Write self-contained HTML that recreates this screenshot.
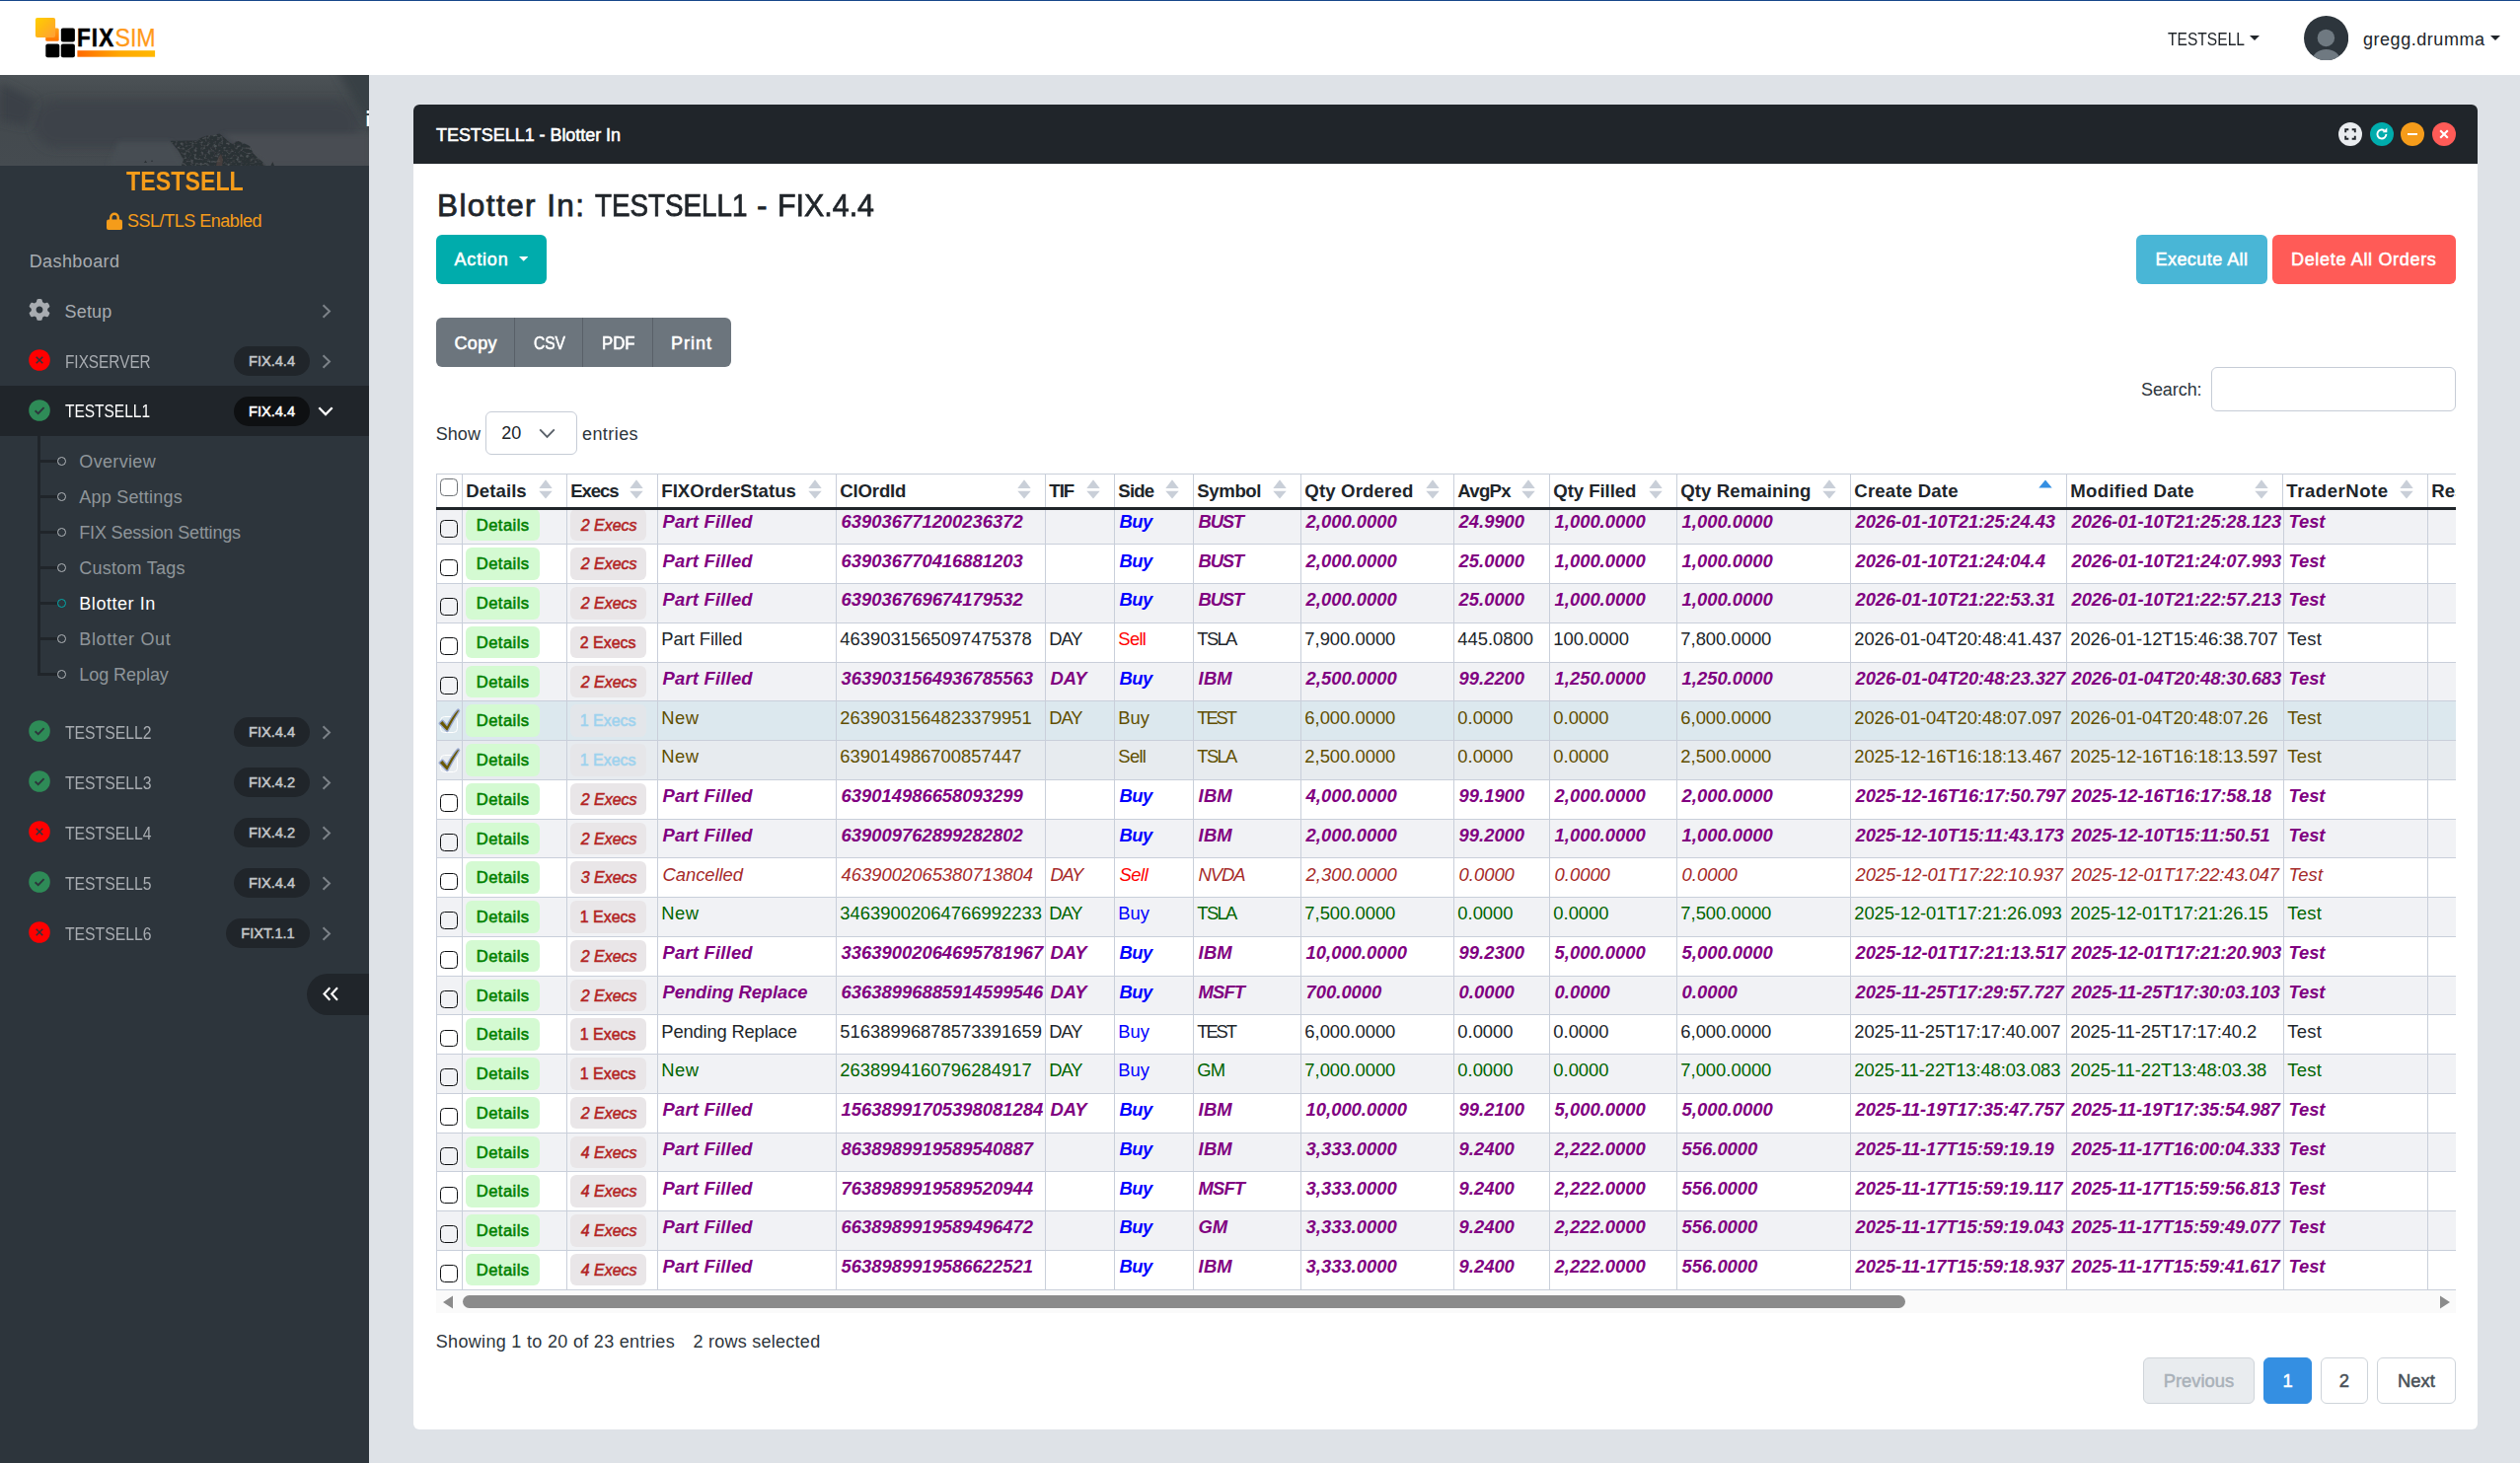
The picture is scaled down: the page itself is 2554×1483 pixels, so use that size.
<!DOCTYPE html>
<html lang="en">
<head>
<meta charset="utf-8">
<title>FIXSIM - TESTSELL1 - Blotter In</title>
<style>
*{box-sizing:border-box}
html,body{margin:0;padding:0}
body{width:2554px;height:1483px;overflow:hidden;background:#dee2e7;font-family:"Liberation Sans",sans-serif;font-size:18px;color:#20252a}
#app{position:relative;width:2554px;height:1483px;overflow:hidden}
.tx{position:absolute;line-height:1;white-space:nowrap}
.abs{position:absolute}
.b{font-weight:bold}
.sb{font-weight:normal;-webkit-text-stroke-width:0.55px}
#topbar{position:absolute;left:0;top:0;width:2554px;height:76px;background:#fff;border-top:1px solid #17478a}
#sidebar{position:absolute;left:0;top:76px;width:374px;height:1407px;background:#2d353c;color:#a8acb1}
#cover{position:absolute;left:0;top:0;width:374px;height:92px;overflow:hidden;background:#42484d}
.mi{position:absolute;left:0;width:374px;height:51px}
.mi.act{background:#20252a}
.badge{position:absolute;height:30px;border-radius:15px;background:#20252a;color:#c3c6c9;font-weight:normal;-webkit-text-stroke-width:0.5px;font-size:14.6px;line-height:30px;text-align:center}
.mi.act .badge{background:#0e1012;color:#fff}
.dot{position:absolute;width:9.6px;height:9.6px;border:1.8px solid #b3b7bb;border-radius:50%}
#panel{position:absolute;left:419px;top:106px;width:2092px;height:1343px;background:#fff;border-radius:6px;overflow:hidden}
#phead{position:absolute;left:0;top:0;width:2092px;height:59.5px;background:#20252a}
.pbtn{position:absolute;top:17.8px;width:24px;height:24px;border-radius:50%}
.btn{position:absolute;border-radius:6px;color:#fff;font-weight:bold}
#tbl{position:absolute;left:442px;top:480px;width:2047px;height:828px;overflow:hidden;background:#fff}
.hr{position:absolute;left:0;top:0;width:2200px;height:37px;border-top:1px solid #c9cfda;border-bottom:3px solid #20252a;display:flex}
.r{position:absolute;left:0;width:2200px;display:flex;border-bottom:1px solid #c9cfda;font-size:18.4px;overflow:hidden}
.r.s{background:#f1f2f5}
.r.sel1{background:#dce8ee}
.r.sel2{background:#e7ebef}
.c{position:relative;flex:0 0 auto;border-left:1px solid #c9cfda;height:100%;overflow:hidden;white-space:nowrap}
.c .v{position:absolute;left:3.3px;line-height:1;white-space:nowrap}
.hr .c{font-weight:bold;font-size:18.6px}
.pf{color:#800080;font-weight:bold;font-style:italic}
.cx{color:#a52a2a;font-style:italic}
.nw{color:#006400}
.nm{color:#20252a}
.sl{color:#604e00}
.buy{color:#0000ff}
.sell{color:#ff0000}
.sl .buy,.sl .sell{color:#604e00}
.det{position:absolute;left:3.3px;width:74.7px;height:32.5px;border-radius:6px;background:#d4fad2;color:#008000;font-weight:normal;-webkit-text-stroke-width:0.55px;font-size:16.6px;line-height:33.4px;letter-spacing:0.45px;text-align:center;font-style:normal}
.exe{position:absolute;left:2.6px;width:77px;height:32.5px;border-radius:6px;background:#e9e6e8;color:#b22222;font-weight:normal;-webkit-text-stroke-width:0.5px;font-size:16px;line-height:34.0px;text-align:center}
.sl .exe{color:#9dd2ee;background:#e6e6e9}
.sel1 .exe{background:#e3e6ea}
.cb{position:absolute;left:2.8px;width:17.8px;height:17.8px;border:1.3px solid #0c0e10;border-radius:4.5px;background:#fff}
.r.s .cb{background:#f1f2f5}
.cbh{border-color:#6f7377;border-width:1.8px}
.cbs{border:1.4px solid #fff;background:transparent !important}
.so{position:absolute;right:14px;top:5.3px;width:14px;height:20px}
.pg{position:absolute;top:1375.7px;height:47.2px;border-radius:6px;border:1px solid #ced4da;background:#fff;color:#495057;font-weight:normal;-webkit-text-stroke-width:0.5px;font-size:18.4px;line-height:45px;text-align:center}
</style>
</head>
<body>
<div id="app">
<div id="topbar">
<svg class="abs" style="left:20px;top:4px" width="160" height="70" viewBox="0 0 160 70">
<defs>
<linearGradient id="g1" x1="0" y1="0" x2="1" y2="1"><stop offset="0" stop-color="#ffd000"/><stop offset="0.45" stop-color="#ffb914"/><stop offset="1" stop-color="#ff9f3a"/></linearGradient>
<linearGradient id="g2" x1="0" y1="0" x2="1" y2="0"><stop offset="0" stop-color="#ff6a00"/><stop offset="0.55" stop-color="#ffa800"/><stop offset="1" stop-color="#ffb800"/></linearGradient>
<linearGradient id="g3" x1="0" y1="0" x2="0" y2="1"><stop offset="0" stop-color="#ffa31a"/><stop offset="1" stop-color="#ff7400"/></linearGradient>
</defs>
<rect x="26.2" y="23.5" width="13.5" height="13.3" rx="1.5" fill="url(#g3)"/>
<rect x="15.9" y="13" width="20.2" height="20" rx="2" fill="url(#g1)"/>
<rect x="41.8" y="23.5" width="14.1" height="14" rx="2" fill="#000"/>
<rect x="26.3" y="39.4" width="14" height="13.8" rx="2" fill="#000"/>
<rect x="41.8" y="39.4" width="14.1" height="13.8" rx="2" fill="#000"/>
<rect x="58.4" y="46.2" width="78.7" height="6.5" fill="url(#g2)"/>
<text transform="translate(58.0 42.2) scale(0.875 1)" font-family="Liberation Sans, sans-serif" font-weight="bold" font-size="25.6" letter-spacing="1.3" fill="#000" stroke="#000" stroke-width="0.5">FIX</text>
<text x="96.4" y="42.2" font-family="Liberation Sans, sans-serif" font-size="25.6" textLength="41.3" lengthAdjust="spacingAndGlyphs" fill="#ff9a1a" stroke="#ff9a1a" stroke-width="0.25">SIM</text>
</svg>
<span id="t1" class="tx" style="top:29.76px;font-size:18.00px;left:2197.00px;transform-origin:0 50%;transform:scaleX(0.8662);">TESTSELL</span>
<svg class="abs" style="left:2280px;top:34.9px" width="10" height="5" viewBox="0 0 10 5"><path d="M0 0h10L5 5z" fill="#20252a"/></svg>
<svg class="abs" style="left:2334.8px;top:14.9px" width="45.2" height="45.2" viewBox="0 0 45 45"><defs><clipPath id="av"><circle cx="22.5" cy="22.5" r="22.5"/></clipPath></defs><circle cx="22.5" cy="22.5" r="22.5" fill="#2d353c"/><g clip-path="url(#av)" fill="#6f7981"><circle cx="22.3" cy="22.3" r="8.7"/><ellipse cx="22.5" cy="46" rx="14.5" ry="12.2"/></g></svg>
<span id="t2" class="tx" style="top:29.76px;font-size:18.00px;left:2395.00px;letter-spacing:0.536px;">gregg.drumma</span>
<svg class="abs" style="left:2524px;top:34.9px" width="10" height="5" viewBox="0 0 10 5"><path d="M0 0h10L5 5z" fill="#20252a"/></svg>
</div>
<div id="sidebar">
<div id="cover"><svg width="374" height="92" viewBox="0 0 374 92">
<defs><linearGradient id="cg" x1="0" y1="0" x2="0" y2="1"><stop offset="0" stop-color="#4c5256"/><stop offset="0.3" stop-color="#43494d"/><stop offset="1" stop-color="#454b50"/></linearGradient>
<filter id="bl" filterUnits="userSpaceOnUse" x="-30" y="-30" width="434" height="152"><feGaussianBlur stdDeviation="5"/></filter>
<filter id="b3" filterUnits="userSpaceOnUse" x="-30" y="-30" width="434" height="152"><feGaussianBlur stdDeviation="2.5"/></filter>
<filter id="b2"><feGaussianBlur stdDeviation="0.5"/></filter>
<filter id="nz" x="0" y="0" width="100%" height="100%" color-interpolation-filters="sRGB"><feTurbulence type="fractalNoise" baseFrequency="0.3 0.38" numOctaves="2" seed="11" result="n"/><feColorMatrix in="n" type="matrix" values="0 0 0 0 0.30  0 0 0 0 0.325  0 0 0 0 0.34  3.2 0 0 0 -1.55" result="c"/><feComposite in="c" in2="SourceGraphic" operator="in"/></filter>
</defs>
<rect width="374" height="92" fill="url(#cg)"/>
<rect x="34" y="26" width="330" height="48" rx="24" fill="#3d4348" filter="url(#bl)"/>
<polygon points="0,8 36,26 28,52 0,46" fill="#3b4146" filter="url(#bl)"/>
<polygon points="224,60 374,60 374,92 272,92" fill="#484e53" filter="url(#b3)"/>
<polygon points="338,-10 400,-10 400,48 372,48" fill="#394045" filter="url(#bl)"/>
<polygon points="120,68 174,68 186,92 110,92" fill="#474d52" filter="url(#b3)"/>
<g filter="url(#b2)"><path id="mt" d="M172.4 66.8 L199 66.4 L204 63.6 L209.7 61.4 L216 61 L222.4 59.6 L226 62.5 L230 66 L232.7 68.4 L236 70.3 L238.5 67.8 L242.2 66.9 L246 69 L250 70.5 L253.3 72.3 L255 76 L256.5 79.2 L260 83 L262.9 85.6 L266 88 L269.2 92 L184 92 L186 86 L181 77 L176 71 Z" fill="#2b3034"/>
<path d="M172.4 66.8 L199 66.4 L204 63.6 L209.7 61.4 L216 61 L222.4 59.6 L226 62.5 L230 66 L232.7 68.4 L236 70.3 L238.5 67.8 L242.2 66.9 L246 69 L250 70.5 L253.3 72.3 L255 76 L256.5 79.2 L260 83 L262.9 85.6 L266 88 L269.2 92 L184 92 L186 86 L181 77 L176 71 Z" fill="#000" filter="url(#nz)"/>
<path d="M274.5 92 L276.3 88 L278 92 Z M146 89 l1.5 -2.5 l1.5 2.5 z M153 88 l1 -2 l1 2 z" fill="#2b3034"/>
<path d="M219 92 L221 84 L224 80 L226 86 L225 92 Z" fill="#5a4a44" opacity="0.55"/></g>
</svg></div>
<div class="abs" style="left:372px;top:36px;width:2px;height:3px;background:#fff;box-shadow:-0.5px 0 0 #6fd0f5"></div><div class="abs" style="left:372px;top:40.8px;width:2px;height:11.5px;background:#fff;box-shadow:-0.5px 0 0 #6fd0f5"></div>
<span id="t3" class="tx b" style="top:94.94px;font-size:27.00px;left:127.50px;transform-origin:0 50%;transform:scaleX(0.8608);color:#f59c1a">TESTSELL</span>
<svg class="abs" style="left:108px;top:139.2px" width="16" height="18" viewBox="0 0 16 18"><path d="M4.3 8V5.4a3.7 3.7 0 0 1 7.4 0V8" fill="none" stroke="#f59c1a" stroke-width="2.4"/><rect x="0" y="7.6" width="16" height="10.4" rx="2" fill="#f59c1a"/></svg>
<span id="t4" class="tx" style="top:139.36px;font-size:18.00px;left:129.00px;letter-spacing:-0.474px;color:#f59c1a">SSL/TLS Enabled</span>
<span id="t5" class="tx" style="top:179.76px;font-size:18.00px;left:29.70px;letter-spacing:0.404px;">Dashboard</span>
<div class="mi" style="top:213.5px">
<svg class="abs" style="left:28.7px;top:13.5px" width="22" height="22" viewBox="0 0 512 512"><path fill="#a8acb1" d="M495.9 166.600C499.100 175.300 496.400 185 489.500 191.200L446.200 230.600C447.300 238.900 447.900 247.400 447.900 256C447.900 264.600 447.300 273.100 446.200 281.400L489.500 320.800C496.400 327 499.100 336.700 495.900 345.400C491.500 357.300 486.200 368.700 480.100 379.700L475.400 387.800C468.800 398.800 461.400 409.200 453.300 419C447.400 426.200 437.600 428.600 428.800 425.800L373.100 408.100C359.700 418.400 344.900 427 329.100 433.500L316.600 490.600C314.600 499.700 307.600 506.900 298.400 508.400C284.600 510.700 270.400 511.900 255.900 511.900C241.400 511.900 227.200 510.700 213.400 508.400C204.200 506.900 197.200 499.700 195.200 490.600L182.700 433.500C166.900 427 152.100 418.400 138.700 408.100L83.100 425.900C74.300 428.700 64.500 426.200 58.600 419.100C50.500 409.300 43.100 398.900 36.500 387.900L31.800 379.800C25.700 368.800 20.400 357.400 16 345.500C12.800 336.800 15.500 327.100 22.400 320.900L65.700 281.500C64.600 273.100 64 264.600 64 256C64 247.400 64.600 238.900 65.700 230.600L22.400 191.200C15.500 185 12.800 175.300 16 166.600C20.400 154.700 25.700 143.300 31.800 132.300L36.500 124.200C43.100 113.200 50.500 102.800 58.600 93C64.500 85.800 74.300 83.400 83.100 86.200L138.800 103.900C152.200 93.600 167 85 182.800 78.500L195.300 21.400C197.300 12.300 204.300 5.100 213.500 3.600C227.300 1.200 241.500 0 256 0C270.500 0 284.700 1.200 298.500 3.500C307.700 5 314.700 12.200 316.700 21.300L329.200 78.400C345 84.900 359.800 93.500 373.200 103.800L428.900 86.100C437.700 83.300 447.500 85.800 453.400 92.900C461.500 102.700 468.900 113.100 475.500 124.100L480.200 132.200C486.300 143.200 491.600 154.600 496 166.500zM256 336C300.200 336 336 300.200 336 256C336 211.800 300.200 176 256 176C211.800 176 176 211.800 176 256C176 300.200 211.800 336 256 336z"/></svg>
<span id="t6" class="tx" style="top:17.26px;font-size:18.00px;left:65.50px;letter-spacing:0.191px;">Setup</span>
<svg class="abs" style="left:325.5px;top:18px" width="10" height="15" viewBox="0 0 10 15"><path d="M1.5 1.2L8 7.5L1.5 13.8" fill="none" stroke="#7c8288" stroke-width="2"/></svg>
</div>
<div class="mi" style="top:264.5px">
<svg class="abs" style="left:28.7px;top:13.6px" width="22" height="22" viewBox="0 0 22 22"><circle cx="11" cy="11" r="10.8" fill="#ff0000"/><path d="M7.7 7.7L14.3 14.3M14.3 7.7L7.7 14.3" fill="none" stroke="#2d353c" stroke-width="1.6"/></svg>
<span id="t7" class="tx" style="top:17.26px;font-size:18.00px;left:65.50px;transform-origin:0 50%;transform:scaleX(0.8525);">FIXSERVER</span>
<span class="badge" style="left:237.0px;top:10.5px;width:77px">FIX.4.4</span>
<svg class="abs" style="left:325.5px;top:18px" width="10" height="15" viewBox="0 0 10 15"><path d="M1.5 1.2L8 7.5L1.5 13.8" fill="none" stroke="#7c8288" stroke-width="2"/></svg>
</div>
<div class="mi act" style="top:315.0px">
<svg class="abs" style="left:28.7px;top:13.6px" width="22" height="22" viewBox="0 0 22 22"><circle cx="11" cy="11" r="10.8" fill="#2e8b57"/><path d="M6.6 11.2L9.7 14.2L15.6 8.2" fill="none" stroke="#2d353c" stroke-width="1.9"/></svg>
<span id="t8" class="tx" style="top:17.26px;font-size:18.00px;left:65.50px;transform-origin:0 50%;transform:scaleX(0.8596);color:#fff;">TESTSELL1</span>
<span class="badge" style="left:237.0px;top:10.5px;width:77px">FIX.4.4</span>
<svg class="abs" style="left:322px;top:21px" width="16" height="10" viewBox="0 0 16 10"><path d="M1.3 1.3L8 8L14.7 1.3" fill="none" stroke="#fff" stroke-width="2.3"/></svg>
</div>
<div class="abs" style="left:38px;top:366.0px;width:2.6px;height:242.8px;background:#20252a"></div>
<div class="abs" style="left:38px;top:390.2px;width:20px;height:2.4px;background:#20252a"></div>
<span class="dot" style="left:57.7px;top:386.6px;"></span>
<span id="t9" class="tx" style="top:382.76px;font-size:18.00px;left:80.30px;letter-spacing:0.336px;color:#8f959a;">Overview</span>
<div class="abs" style="left:38px;top:426.2px;width:20px;height:2.4px;background:#20252a"></div>
<span class="dot" style="left:57.7px;top:422.6px;"></span>
<span id="t10" class="tx" style="top:418.78px;font-size:18.00px;left:80.30px;letter-spacing:0.210px;color:#8f959a;">App Settings</span>
<div class="abs" style="left:38px;top:462.2px;width:20px;height:2.4px;background:#20252a"></div>
<span class="dot" style="left:57.7px;top:458.6px;"></span>
<span id="t11" class="tx" style="top:454.80px;font-size:18.00px;left:80.30px;letter-spacing:-0.175px;color:#8f959a;">FIX Session Settings</span>
<div class="abs" style="left:38px;top:498.3px;width:20px;height:2.4px;background:#20252a"></div>
<span class="dot" style="left:57.7px;top:494.7px;"></span>
<span id="t12" class="tx" style="top:490.82px;font-size:18.00px;left:80.30px;letter-spacing:0.253px;color:#8f959a;">Custom Tags</span>
<div class="abs" style="left:38px;top:534.3px;width:20px;height:2.4px;background:#20252a"></div>
<span class="dot" style="left:57.7px;top:530.7px;border-color:#00acac;"></span>
<span id="t13" class="tx" style="top:526.84px;font-size:18.00px;left:80.30px;letter-spacing:0.545px;color:#fff;">Blotter In</span>
<div class="abs" style="left:38px;top:570.3px;width:20px;height:2.4px;background:#20252a"></div>
<span class="dot" style="left:57.7px;top:566.7px;"></span>
<span id="t14" class="tx" style="top:562.86px;font-size:18.00px;left:80.30px;letter-spacing:0.632px;color:#8f959a;">Blotter Out</span>
<div class="abs" style="left:38px;top:606.3px;width:20px;height:2.4px;background:#20252a"></div>
<span class="dot" style="left:57.7px;top:602.7px;"></span>
<span id="t15" class="tx" style="top:598.88px;font-size:18.00px;left:80.30px;letter-spacing:-0.058px;color:#8f959a;">Log Replay</span>
<div class="mi" style="top:640.6px">
<svg class="abs" style="left:28.7px;top:13.6px" width="22" height="22" viewBox="0 0 22 22"><circle cx="11" cy="11" r="10.8" fill="#2e8b57"/><path d="M6.6 11.2L9.7 14.2L15.6 8.2" fill="none" stroke="#2d353c" stroke-width="1.9"/></svg>
<span id="t16" class="tx" style="top:17.26px;font-size:18.00px;left:65.50px;transform-origin:0 50%;transform:scaleX(0.8746);">TESTSELL2</span>
<span class="badge" style="left:237.0px;top:10.5px;width:77px">FIX.4.4</span>
<svg class="abs" style="left:325.5px;top:18px" width="10" height="15" viewBox="0 0 10 15"><path d="M1.5 1.2L8 7.5L1.5 13.8" fill="none" stroke="#7c8288" stroke-width="2"/></svg>
</div>
<div class="mi" style="top:691.6px">
<svg class="abs" style="left:28.7px;top:13.6px" width="22" height="22" viewBox="0 0 22 22"><circle cx="11" cy="11" r="10.8" fill="#2e8b57"/><path d="M6.6 11.2L9.7 14.2L15.6 8.2" fill="none" stroke="#2d353c" stroke-width="1.9"/></svg>
<span id="t17" class="tx" style="top:17.26px;font-size:18.00px;left:65.50px;transform-origin:0 50%;transform:scaleX(0.8746);">TESTSELL3</span>
<span class="badge" style="left:237.0px;top:10.5px;width:77px">FIX.4.2</span>
<svg class="abs" style="left:325.5px;top:18px" width="10" height="15" viewBox="0 0 10 15"><path d="M1.5 1.2L8 7.5L1.5 13.8" fill="none" stroke="#7c8288" stroke-width="2"/></svg>
</div>
<div class="mi" style="top:742.6px">
<svg class="abs" style="left:28.7px;top:13.6px" width="22" height="22" viewBox="0 0 22 22"><circle cx="11" cy="11" r="10.8" fill="#ff0000"/><path d="M7.7 7.7L14.3 14.3M14.3 7.7L7.7 14.3" fill="none" stroke="#2d353c" stroke-width="1.6"/></svg>
<span id="t18" class="tx" style="top:17.26px;font-size:18.00px;left:65.50px;transform-origin:0 50%;transform:scaleX(0.8746);">TESTSELL4</span>
<span class="badge" style="left:237.0px;top:10.5px;width:77px">FIX.4.2</span>
<svg class="abs" style="left:325.5px;top:18px" width="10" height="15" viewBox="0 0 10 15"><path d="M1.5 1.2L8 7.5L1.5 13.8" fill="none" stroke="#7c8288" stroke-width="2"/></svg>
</div>
<div class="mi" style="top:793.6px">
<svg class="abs" style="left:28.7px;top:13.6px" width="22" height="22" viewBox="0 0 22 22"><circle cx="11" cy="11" r="10.8" fill="#2e8b57"/><path d="M6.6 11.2L9.7 14.2L15.6 8.2" fill="none" stroke="#2d353c" stroke-width="1.9"/></svg>
<span id="t19" class="tx" style="top:17.26px;font-size:18.00px;left:65.50px;transform-origin:0 50%;transform:scaleX(0.8746);">TESTSELL5</span>
<span class="badge" style="left:237.0px;top:10.5px;width:77px">FIX.4.4</span>
<svg class="abs" style="left:325.5px;top:18px" width="10" height="15" viewBox="0 0 10 15"><path d="M1.5 1.2L8 7.5L1.5 13.8" fill="none" stroke="#7c8288" stroke-width="2"/></svg>
</div>
<div class="mi" style="top:844.6px">
<svg class="abs" style="left:28.7px;top:13.6px" width="22" height="22" viewBox="0 0 22 22"><circle cx="11" cy="11" r="10.8" fill="#ff0000"/><path d="M7.7 7.7L14.3 14.3M14.3 7.7L7.7 14.3" fill="none" stroke="#2d353c" stroke-width="1.6"/></svg>
<span id="t20" class="tx" style="top:17.26px;font-size:18.00px;left:65.50px;transform-origin:0 50%;transform:scaleX(0.8746);">TESTSELL6</span>
<span class="badge" style="left:229.0px;top:10.5px;width:85px">FIXT.1.1</span>
<svg class="abs" style="left:325.5px;top:18px" width="10" height="15" viewBox="0 0 10 15"><path d="M1.5 1.2L8 7.5L1.5 13.8" fill="none" stroke="#7c8288" stroke-width="2"/></svg>
</div>
<div class="abs" style="left:311px;top:911.0px;width:63px;height:42px;border-radius:21px 0 0 21px;background:#20252a"></div>
<svg class="abs" style="left:326.5px;top:923.8px" width="17" height="15" viewBox="0 0 17 15"><path d="M7.3 1.2L1.5 7.5L7.3 13.8M15 1.2L9.2 7.5L15 13.8" fill="none" stroke="#fff" stroke-width="2.1"/></svg>
</div>
<div id="panel"><div id="phead"></div></div>
<span id="t21" class="tx sb" style="top:127.56px;font-size:18.00px;left:442.00px;letter-spacing:-0.049px;color:#fff">TESTSELL1 - Blotter In</span>
<svg class="abs" style="left:2370.1px;top:123.8px" width="24" height="24" viewBox="0 0 24 24"><circle cx="12" cy="12" r="12" fill="#e9ecef"/><path d="M7.2 10.3V7.2h3.1M13.7 7.2h3.1v3.1M16.8 13.7v3.1h-3.1M10.3 16.8H7.2v-3.1" fill="none" stroke="#20252a" stroke-width="1.9"/></svg>
<svg class="abs" style="left:2401.9px;top:123.8px" width="24" height="24" viewBox="0 0 24 24"><circle cx="12" cy="12" r="12" fill="#00acac"/><path d="M16.4 12A4.5 4.5 0 1 1 14.6 8.4" fill="none" stroke="#fff" stroke-width="1.9"/><path d="M17.3 5.6v4.6h-4.6z" fill="#fff"/></svg>
<svg class="abs" style="left:2432.9px;top:123.8px" width="24" height="24" viewBox="0 0 24 24"><circle cx="12" cy="12" r="12" fill="#f59c1a"/><path d="M7 12h10" stroke="#fff" stroke-width="2"/></svg>
<svg class="abs" style="left:2464.9px;top:123.8px" width="24" height="24" viewBox="0 0 24 24"><circle cx="12" cy="12" r="12" fill="#ff5b57"/><path d="M8.2 8.2l7.6 7.6M15.8 8.2l-7.6 7.6" stroke="#fff" stroke-width="2.1"/></svg>
<h2 style="margin:0;font-weight:normal;font-size:31.5px;color:#20252a;-webkit-text-stroke:0.75px #20252a">
<span id="t22" class="tx" style="top:193.34px;font-size:31.50px;left:443.00px;letter-spacing:1.425px;">Blotter In:</span>
<span id="t23" class="tx" style="top:193.34px;font-size:31.50px;left:602.50px;transform-origin:0 50%;transform:scaleX(0.8824);">TESTSELL1</span>
<span id="t24" class="tx" style="top:193.34px;font-size:31.50px;left:767.00px;letter-spacing:0.000px;">-</span>
<span id="t25" class="tx" style="top:193.34px;font-size:31.50px;left:787.50px;transform-origin:0 50%;transform:scaleX(0.9651);">FIX.4.4</span>
</h2>
<div class="btn" style="left:442px;top:238px;width:111.7px;height:49.6px;background:#00acac"></div>
<span id="t26" class="tx sb" style="top:253.51px;font-size:18.00px;left:460.50px;letter-spacing:0.828px;color:#fff">Action</span>
<svg class="abs" style="left:525.7px;top:260.4px" width="9.4" height="4.7" viewBox="0 0 10 5"><path d="M0 0h10L5 5z" fill="#fff"/></svg>
<div class="btn" style="left:2165px;top:238px;width:132.7px;height:49.6px;background:#49b6d6"></div>
<span id="t27" class="tx sb" style="top:253.51px;font-size:18.00px;left:2184.50px;letter-spacing:0.449px;color:#fff">Execute All</span>
<div class="btn" style="left:2303px;top:238px;width:185.7px;height:49.6px;background:#ff5b57"></div>
<span id="t28" class="tx sb" style="top:253.51px;font-size:18.00px;left:2322.00px;letter-spacing:0.673px;color:#fff">Delete All Orders</span>
<div class="btn" style="left:442px;top:322px;width:298.8px;height:49.6px;background:#6c757d"></div>
<div class="abs" style="left:521.0px;top:322px;width:1px;height:49.6px;background:#596068"></div>
<div class="abs" style="left:589.8px;top:322px;width:1px;height:49.6px;background:#596068"></div>
<div class="abs" style="left:661.0px;top:322px;width:1px;height:49.6px;background:#596068"></div>
<span id="t29" class="tx sb" style="top:338.51px;font-size:18.00px;left:460.50px;letter-spacing:0.317px;color:#fff">Copy</span>
<span id="t30" class="tx sb" style="top:338.51px;font-size:18.00px;left:540.50px;transform-origin:0 50%;transform:scaleX(0.8645);color:#fff">CSV</span>
<span id="t31" class="tx sb" style="top:338.51px;font-size:18.00px;left:609.75px;transform-origin:0 50%;transform:scaleX(0.9306);color:#fff">PDF</span>
<span id="t32" class="tx sb" style="top:338.51px;font-size:18.00px;left:680.00px;letter-spacing:0.997px;color:#fff">Print</span>
<span id="t33" class="tx" style="top:385.76px;font-size:18.00px;left:2170.00px;letter-spacing:-0.078px;color:#2d353c">Search:</span>
<div class="abs" style="left:2241px;top:372px;width:247.7px;height:45px;border:1px solid #c6ccd6;border-radius:6px;background:#fff"></div>
<span id="t34" class="tx" style="top:430.51px;font-size:18.00px;left:441.75px;letter-spacing:0.042px;color:#2d353c">Show</span>
<div class="abs" style="left:492px;top:417px;width:92.6px;height:43.6px;border:1px solid #c6ccd6;border-radius:6px;background:#fff"></div>
<span id="t35" class="tx" style="top:430.01px;font-size:18.00px;left:508.25px;letter-spacing:-0.116px;">20</span>
<svg class="abs" style="left:545.8px;top:434px" width="17" height="11" viewBox="0 0 17 11"><path d="M1.2 1.4L8.5 8.8L15.8 1.4" fill="none" stroke="#596069" stroke-width="1.9"/></svg>
<span id="t36" class="tx" style="top:430.51px;font-size:18.00px;left:590.00px;letter-spacing:0.424px;color:#2d353c">entries</span>
<div id="tbl">
<div class="hr">
<div class="c" style="width:26px"><span class="cb cbh" style="top:4.3px"></span></div>
<div class="c" style="width:106px"><span id="h1" class="v" style="top:8.16px;letter-spacing:0.074px">Details</span><svg class="so" viewBox="0 0 14 20"><path d="M0.3 9.1L7 0.2L13.7 9.1z" fill="#c9cfd8"/><path d="M0.3 11.7L7 19.4L13.7 11.7z" fill="#c9cfd8"/></svg></div>
<div class="c" style="width:92px"><span id="h2" class="v" style="top:8.16px;letter-spacing:-1.096px">Execs</span><svg class="so" viewBox="0 0 14 20"><path d="M0.3 9.1L7 0.2L13.7 9.1z" fill="#c9cfd8"/><path d="M0.3 11.7L7 19.4L13.7 11.7z" fill="#c9cfd8"/></svg></div>
<div class="c" style="width:181px"><span id="h3" class="v" style="top:8.16px;letter-spacing:0.015px">FIXOrderStatus</span><svg class="so" viewBox="0 0 14 20"><path d="M0.3 9.1L7 0.2L13.7 9.1z" fill="#c9cfd8"/><path d="M0.3 11.7L7 19.4L13.7 11.7z" fill="#c9cfd8"/></svg></div>
<div class="c" style="width:212px"><span id="h4" class="v" style="top:8.16px;letter-spacing:-0.170px">ClOrdId</span><svg class="so" viewBox="0 0 14 20"><path d="M0.3 9.1L7 0.2L13.7 9.1z" fill="#c9cfd8"/><path d="M0.3 11.7L7 19.4L13.7 11.7z" fill="#c9cfd8"/></svg></div>
<div class="c" style="width:70px"><span id="h5" class="v" style="top:8.16px;letter-spacing:-0.997px">TIF</span><svg class="so" viewBox="0 0 14 20"><path d="M0.3 9.1L7 0.2L13.7 9.1z" fill="#c9cfd8"/><path d="M0.3 11.7L7 19.4L13.7 11.7z" fill="#c9cfd8"/></svg></div>
<div class="c" style="width:80px"><span id="h6" class="v" style="top:8.16px;letter-spacing:-0.795px">Side</span><svg class="so" viewBox="0 0 14 20"><path d="M0.3 9.1L7 0.2L13.7 9.1z" fill="#c9cfd8"/><path d="M0.3 11.7L7 19.4L13.7 11.7z" fill="#c9cfd8"/></svg></div>
<div class="c" style="width:109px"><span id="h7" class="v" style="top:8.16px;letter-spacing:-0.395px">Symbol</span><svg class="so" viewBox="0 0 14 20"><path d="M0.3 9.1L7 0.2L13.7 9.1z" fill="#c9cfd8"/><path d="M0.3 11.7L7 19.4L13.7 11.7z" fill="#c9cfd8"/></svg></div>
<div class="c" style="width:155px"><span id="h8" class="v" style="top:8.16px;letter-spacing:0.155px">Qty Ordered</span><svg class="so" viewBox="0 0 14 20"><path d="M0.3 9.1L7 0.2L13.7 9.1z" fill="#c9cfd8"/><path d="M0.3 11.7L7 19.4L13.7 11.7z" fill="#c9cfd8"/></svg></div>
<div class="c" style="width:97px"><span id="h9" class="v" style="top:8.16px;letter-spacing:-0.717px">AvgPx</span><svg class="so" viewBox="0 0 14 20"><path d="M0.3 9.1L7 0.2L13.7 9.1z" fill="#c9cfd8"/><path d="M0.3 11.7L7 19.4L13.7 11.7z" fill="#c9cfd8"/></svg></div>
<div class="c" style="width:129px"><span id="h10" class="v" style="top:8.16px;letter-spacing:-0.062px">Qty Filled</span><svg class="so" viewBox="0 0 14 20"><path d="M0.3 9.1L7 0.2L13.7 9.1z" fill="#c9cfd8"/><path d="M0.3 11.7L7 19.4L13.7 11.7z" fill="#c9cfd8"/></svg></div>
<div class="c" style="width:176px"><span id="h11" class="v" style="top:8.16px;letter-spacing:0.068px">Qty Remaining</span><svg class="so" viewBox="0 0 14 20"><path d="M0.3 9.1L7 0.2L13.7 9.1z" fill="#c9cfd8"/><path d="M0.3 11.7L7 19.4L13.7 11.7z" fill="#c9cfd8"/></svg></div>
<div class="c" style="width:219px"><span id="h12" class="v" style="top:8.16px;letter-spacing:0.186px">Create Date</span><svg class="so" viewBox="0 0 14 20"><path d="M0.3 8.6L7 0.4L13.7 8.6z" fill="#348fe2"/></svg></div>
<div class="c" style="width:219px"><span id="h13" class="v" style="top:8.16px;letter-spacing:0.292px">Modified Date</span><svg class="so" viewBox="0 0 14 20"><path d="M0.3 9.1L7 0.2L13.7 9.1z" fill="#c9cfd8"/><path d="M0.3 11.7L7 19.4L13.7 11.7z" fill="#c9cfd8"/></svg></div>
<div class="c" style="width:147px"><span id="h14" class="v" style="top:8.16px;letter-spacing:0.523px">TraderNote</span><svg class="so" viewBox="0 0 14 20"><path d="M0.3 9.1L7 0.2L13.7 9.1z" fill="#c9cfd8"/><path d="M0.3 11.7L7 19.4L13.7 11.7z" fill="#c9cfd8"/></svg></div>
<div class="c" style="width:120px"><span id="h15" class="v" style="top:8.16px">Result</span><svg class="so" viewBox="0 0 14 20"><path d="M0.3 9.1L7 0.2L13.7 9.1z" fill="#c9cfd8"/><path d="M0.3 11.7L7 19.4L13.7 11.7z" fill="#c9cfd8"/></svg></div>
</div>
<div class="r pf s" style="top:37px;height:35px">
<div class="c" style="width:26px"><span class="cb" style="top:9.88px"></span></div>
<div class="c" style="width:106px"><span class="det" style="top:-1.50px">Details</span></div>
<div class="c" style="width:92px"><span class="exe" style="top:-1.50px;font-style:italic;padding-left:2px;">2 Execs</span></div>
<div class="c" style="width:181px"><span id="c0_0" class="v" style="top:2.82px;left:4.6px;letter-spacing:0.207px">Part Filled</span></div>
<div class="c" style="width:212px"><span class="v" style="top:2.82px;left:4.6px">639036771200236372</span></div>
<div class="c" style="width:70px"><span class="v" style="top:2.82px;left:4.6px"></span></div>
<div class="c" style="width:80px"><span id="c0_3" class="v" style="top:2.82px;left:4.6px;letter-spacing:-0.583px"><span class="buy">Buy</span></span></div>
<div class="c" style="width:109px"><span id="c0_4" class="v" style="top:2.82px;left:4.6px;letter-spacing:-1.216px">BUST</span></div>
<div class="c" style="width:155px"><span class="v" style="top:2.82px;left:4.6px">2,000.0000</span></div>
<div class="c" style="width:97px"><span class="v" style="top:2.82px;left:4.6px">24.9900</span></div>
<div class="c" style="width:129px"><span class="v" style="top:2.82px;left:4.6px">1,000.0000</span></div>
<div class="c" style="width:176px"><span class="v" style="top:2.82px;left:4.6px">1,000.0000</span></div>
<div class="c" style="width:219px"><span class="v" style="top:2.82px;left:4.6px;letter-spacing:-0.1px">2026-01-10T21:25:24.43</span></div>
<div class="c" style="width:220px"><span class="v" style="top:2.82px;left:4.6px;letter-spacing:-0.1px">2026-01-10T21:25:28.123</span></div>
<div class="c" style="width:146px"><span id="c0_11" class="v" style="top:2.82px;left:4.6px;letter-spacing:-0.085px">Test</span></div>
<div class="c" style="width:120px"><span class="v" style="top:2.82px;left:4.6px"></span></div>
</div>
<div class="r pf" style="top:72px;height:40px">
<div class="c" style="width:26px"><span class="cb" style="top:14.63px"></span></div>
<div class="c" style="width:106px"><span class="det" style="top:3.25px">Details</span></div>
<div class="c" style="width:92px"><span class="exe" style="top:3.25px;font-style:italic;padding-left:2px;">2 Execs</span></div>
<div class="c" style="width:181px"><span id="c1_0" class="v" style="top:7.57px;left:4.6px;letter-spacing:0.207px">Part Filled</span></div>
<div class="c" style="width:212px"><span class="v" style="top:7.57px;left:4.6px">639036770416881203</span></div>
<div class="c" style="width:70px"><span class="v" style="top:7.57px;left:4.6px"></span></div>
<div class="c" style="width:80px"><span id="c1_3" class="v" style="top:7.57px;left:4.6px;letter-spacing:-0.583px"><span class="buy">Buy</span></span></div>
<div class="c" style="width:109px"><span id="c1_4" class="v" style="top:7.57px;left:4.6px;letter-spacing:-1.216px">BUST</span></div>
<div class="c" style="width:155px"><span class="v" style="top:7.57px;left:4.6px">2,000.0000</span></div>
<div class="c" style="width:97px"><span class="v" style="top:7.57px;left:4.6px">25.0000</span></div>
<div class="c" style="width:129px"><span class="v" style="top:7.57px;left:4.6px">1,000.0000</span></div>
<div class="c" style="width:176px"><span class="v" style="top:7.57px;left:4.6px">1,000.0000</span></div>
<div class="c" style="width:219px"><span class="v" style="top:7.57px;left:4.6px;letter-spacing:-0.1px">2026-01-10T21:24:04.4</span></div>
<div class="c" style="width:220px"><span class="v" style="top:7.57px;left:4.6px;letter-spacing:-0.1px">2026-01-10T21:24:07.993</span></div>
<div class="c" style="width:146px"><span id="c1_11" class="v" style="top:7.57px;left:4.6px;letter-spacing:-0.085px">Test</span></div>
<div class="c" style="width:120px"><span class="v" style="top:7.57px;left:4.6px"></span></div>
</div>
<div class="r pf s" style="top:112px;height:40px">
<div class="c" style="width:26px"><span class="cb" style="top:14.38px"></span></div>
<div class="c" style="width:106px"><span class="det" style="top:3.00px">Details</span></div>
<div class="c" style="width:92px"><span class="exe" style="top:3.00px;font-style:italic;padding-left:2px;">2 Execs</span></div>
<div class="c" style="width:181px"><span id="c2_0" class="v" style="top:7.32px;left:4.6px;letter-spacing:0.207px">Part Filled</span></div>
<div class="c" style="width:212px"><span class="v" style="top:7.32px;left:4.6px">639036769674179532</span></div>
<div class="c" style="width:70px"><span class="v" style="top:7.32px;left:4.6px"></span></div>
<div class="c" style="width:80px"><span id="c2_3" class="v" style="top:7.32px;left:4.6px;letter-spacing:-0.583px"><span class="buy">Buy</span></span></div>
<div class="c" style="width:109px"><span id="c2_4" class="v" style="top:7.32px;left:4.6px;letter-spacing:-1.216px">BUST</span></div>
<div class="c" style="width:155px"><span class="v" style="top:7.32px;left:4.6px">2,000.0000</span></div>
<div class="c" style="width:97px"><span class="v" style="top:7.32px;left:4.6px">25.0000</span></div>
<div class="c" style="width:129px"><span class="v" style="top:7.32px;left:4.6px">1,000.0000</span></div>
<div class="c" style="width:176px"><span class="v" style="top:7.32px;left:4.6px">1,000.0000</span></div>
<div class="c" style="width:219px"><span class="v" style="top:7.32px;left:4.6px;letter-spacing:-0.1px">2026-01-10T21:22:53.31</span></div>
<div class="c" style="width:220px"><span class="v" style="top:7.32px;left:4.6px;letter-spacing:-0.1px">2026-01-10T21:22:57.213</span></div>
<div class="c" style="width:146px"><span id="c2_11" class="v" style="top:7.32px;left:4.6px;letter-spacing:-0.085px">Test</span></div>
<div class="c" style="width:120px"><span class="v" style="top:7.32px;left:4.6px"></span></div>
</div>
<div class="r nm" style="top:152px;height:40px">
<div class="c" style="width:26px"><span class="cb" style="top:14.13px"></span></div>
<div class="c" style="width:106px"><span class="det" style="top:2.75px">Details</span></div>
<div class="c" style="width:92px"><span class="exe" style="top:2.75px;">2 Execs</span></div>
<div class="c" style="width:181px"><span id="c3_0" class="v" style="top:7.07px;letter-spacing:-0.072px">Part Filled</span></div>
<div class="c" style="width:212px"><span class="v" style="top:7.07px">4639031565097475378</span></div>
<div class="c" style="width:70px"><span id="c3_2" class="v" style="top:7.07px;letter-spacing:-1.151px">DAY</span></div>
<div class="c" style="width:80px"><span id="c3_3" class="v" style="top:7.07px;letter-spacing:-0.668px"><span class="sell">Sell</span></span></div>
<div class="c" style="width:109px"><span id="c3_4" class="v" style="top:7.07px;letter-spacing:-1.650px">TSLA</span></div>
<div class="c" style="width:155px"><span class="v" style="top:7.07px">7,900.0000</span></div>
<div class="c" style="width:97px"><span class="v" style="top:7.07px">445.0800</span></div>
<div class="c" style="width:129px"><span class="v" style="top:7.07px">100.0000</span></div>
<div class="c" style="width:176px"><span class="v" style="top:7.07px">7,800.0000</span></div>
<div class="c" style="width:219px"><span class="v" style="top:7.07px;letter-spacing:-0.1px">2026-01-04T20:48:41.437</span></div>
<div class="c" style="width:220px"><span class="v" style="top:7.07px;letter-spacing:-0.1px">2026-01-12T15:46:38.707</span></div>
<div class="c" style="width:146px"><span id="c3_11" class="v" style="top:7.07px;letter-spacing:0.266px">Test</span></div>
<div class="c" style="width:120px"><span class="v" style="top:7.07px"></span></div>
</div>
<div class="r pf s" style="top:192px;height:39px">
<div class="c" style="width:26px"><span class="cb" style="top:13.88px"></span></div>
<div class="c" style="width:106px"><span class="det" style="top:2.50px">Details</span></div>
<div class="c" style="width:92px"><span class="exe" style="top:2.50px;font-style:italic;padding-left:2px;">2 Execs</span></div>
<div class="c" style="width:181px"><span id="c4_0" class="v" style="top:6.82px;left:4.6px;letter-spacing:0.207px">Part Filled</span></div>
<div class="c" style="width:212px"><span class="v" style="top:6.82px;left:4.6px">3639031564936785563</span></div>
<div class="c" style="width:70px"><span id="c4_2" class="v" style="top:6.82px;left:4.6px;letter-spacing:-0.223px">DAY</span></div>
<div class="c" style="width:80px"><span id="c4_3" class="v" style="top:6.82px;left:4.6px;letter-spacing:-0.583px"><span class="buy">Buy</span></span></div>
<div class="c" style="width:109px"><span id="c4_4" class="v" style="top:6.82px;left:4.6px;letter-spacing:0.194px">IBM</span></div>
<div class="c" style="width:155px"><span class="v" style="top:6.82px;left:4.6px">2,500.0000</span></div>
<div class="c" style="width:97px"><span class="v" style="top:6.82px;left:4.6px">99.2200</span></div>
<div class="c" style="width:129px"><span class="v" style="top:6.82px;left:4.6px">1,250.0000</span></div>
<div class="c" style="width:176px"><span class="v" style="top:6.82px;left:4.6px">1,250.0000</span></div>
<div class="c" style="width:219px"><span class="v" style="top:6.82px;left:4.6px;letter-spacing:-0.1px">2026-01-04T20:48:23.327</span></div>
<div class="c" style="width:220px"><span class="v" style="top:6.82px;left:4.6px;letter-spacing:-0.1px">2026-01-04T20:48:30.683</span></div>
<div class="c" style="width:146px"><span id="c4_11" class="v" style="top:6.82px;left:4.6px;letter-spacing:-0.085px">Test</span></div>
<div class="c" style="width:120px"><span class="v" style="top:6.82px;left:4.6px"></span></div>
</div>
<div class="r sl sel1" style="top:231px;height:40px">
<div class="c" style="width:26px"><span class="cb cbs" style="top:14.6px"></span><svg class="abs" style="left:0;top:-0.2px" width="25" height="36" viewBox="0 0 25 36"><path d="M2.9 22.2 L5.4 19.9 L10.1 25.4 Q15.2 15.2 21.3 8.7 L21.9 9.5 Q15.7 19.3 10.2 29.8 Z" fill="#9aa9cf" stroke="#9aa9cf" stroke-width="2.8" stroke-linejoin="round"/><path d="M2.9 22.2 L5.4 19.9 L10.1 25.4 Q15.2 15.2 21.3 8.7 L21.9 9.5 Q15.7 19.3 10.2 29.8 Z" fill="#6a5800"/></svg></div>
<div class="c" style="width:106px"><span class="det" style="top:3.25px">Details</span></div>
<div class="c" style="width:92px"><span class="exe" style="top:3.25px;">1 Execs</span></div>
<div class="c" style="width:181px"><span id="c5_0" class="v" style="top:7.57px;letter-spacing:0.534px">New</span></div>
<div class="c" style="width:212px"><span class="v" style="top:7.57px">2639031564823379951</span></div>
<div class="c" style="width:70px"><span id="c5_2" class="v" style="top:7.57px;letter-spacing:-1.151px">DAY</span></div>
<div class="c" style="width:80px"><span id="c5_3" class="v" style="top:7.57px;letter-spacing:-0.068px"><span class="buy">Buy</span></span></div>
<div class="c" style="width:109px"><span id="c5_4" class="v" style="top:7.57px;letter-spacing:-2.104px">TEST</span></div>
<div class="c" style="width:155px"><span class="v" style="top:7.57px">6,000.0000</span></div>
<div class="c" style="width:97px"><span class="v" style="top:7.57px">0.0000</span></div>
<div class="c" style="width:129px"><span class="v" style="top:7.57px">0.0000</span></div>
<div class="c" style="width:176px"><span class="v" style="top:7.57px">6,000.0000</span></div>
<div class="c" style="width:219px"><span class="v" style="top:7.57px;letter-spacing:-0.1px">2026-01-04T20:48:07.097</span></div>
<div class="c" style="width:220px"><span class="v" style="top:7.57px;letter-spacing:-0.1px">2026-01-04T20:48:07.26</span></div>
<div class="c" style="width:146px"><span id="c5_11" class="v" style="top:7.57px;letter-spacing:0.266px">Test</span></div>
<div class="c" style="width:120px"><span class="v" style="top:7.57px"></span></div>
</div>
<div class="r sl s sel2" style="top:271px;height:40px">
<div class="c" style="width:26px"><span class="cb cbs" style="top:14.4px"></span><svg class="abs" style="left:0;top:-0.4px" width="25" height="36" viewBox="0 0 25 36"><path d="M2.9 22.2 L5.4 19.9 L10.1 25.4 Q15.2 15.2 21.3 8.7 L21.9 9.5 Q15.7 19.3 10.2 29.8 Z" fill="#9aa9cf" stroke="#9aa9cf" stroke-width="2.8" stroke-linejoin="round"/><path d="M2.9 22.2 L5.4 19.9 L10.1 25.4 Q15.2 15.2 21.3 8.7 L21.9 9.5 Q15.7 19.3 10.2 29.8 Z" fill="#6a5800"/></svg></div>
<div class="c" style="width:106px"><span class="det" style="top:3.00px">Details</span></div>
<div class="c" style="width:92px"><span class="exe" style="top:3.00px;">1 Execs</span></div>
<div class="c" style="width:181px"><span id="c6_0" class="v" style="top:7.32px;letter-spacing:0.534px">New</span></div>
<div class="c" style="width:212px"><span class="v" style="top:7.32px">639014986700857447</span></div>
<div class="c" style="width:70px"><span class="v" style="top:7.32px"></span></div>
<div class="c" style="width:80px"><span id="c6_3" class="v" style="top:7.32px;letter-spacing:-0.668px"><span class="sell">Sell</span></span></div>
<div class="c" style="width:109px"><span id="c6_4" class="v" style="top:7.32px;letter-spacing:-1.650px">TSLA</span></div>
<div class="c" style="width:155px"><span class="v" style="top:7.32px">2,500.0000</span></div>
<div class="c" style="width:97px"><span class="v" style="top:7.32px">0.0000</span></div>
<div class="c" style="width:129px"><span class="v" style="top:7.32px">0.0000</span></div>
<div class="c" style="width:176px"><span class="v" style="top:7.32px">2,500.0000</span></div>
<div class="c" style="width:219px"><span class="v" style="top:7.32px;letter-spacing:-0.1px">2025-12-16T16:18:13.467</span></div>
<div class="c" style="width:220px"><span class="v" style="top:7.32px;letter-spacing:-0.1px">2025-12-16T16:18:13.597</span></div>
<div class="c" style="width:146px"><span id="c6_11" class="v" style="top:7.32px;letter-spacing:0.266px">Test</span></div>
<div class="c" style="width:120px"><span class="v" style="top:7.32px"></span></div>
</div>
<div class="r pf" style="top:311px;height:40px">
<div class="c" style="width:26px"><span class="cb" style="top:14.13px"></span></div>
<div class="c" style="width:106px"><span class="det" style="top:2.75px">Details</span></div>
<div class="c" style="width:92px"><span class="exe" style="top:2.75px;font-style:italic;padding-left:2px;">2 Execs</span></div>
<div class="c" style="width:181px"><span id="c7_0" class="v" style="top:7.07px;left:4.6px;letter-spacing:0.207px">Part Filled</span></div>
<div class="c" style="width:212px"><span class="v" style="top:7.07px;left:4.6px">639014986658093299</span></div>
<div class="c" style="width:70px"><span class="v" style="top:7.07px;left:4.6px"></span></div>
<div class="c" style="width:80px"><span id="c7_3" class="v" style="top:7.07px;left:4.6px;letter-spacing:-0.583px"><span class="buy">Buy</span></span></div>
<div class="c" style="width:109px"><span id="c7_4" class="v" style="top:7.07px;left:4.6px;letter-spacing:0.194px">IBM</span></div>
<div class="c" style="width:155px"><span class="v" style="top:7.07px;left:4.6px">4,000.0000</span></div>
<div class="c" style="width:97px"><span class="v" style="top:7.07px;left:4.6px">99.1900</span></div>
<div class="c" style="width:129px"><span class="v" style="top:7.07px;left:4.6px">2,000.0000</span></div>
<div class="c" style="width:176px"><span class="v" style="top:7.07px;left:4.6px">2,000.0000</span></div>
<div class="c" style="width:219px"><span class="v" style="top:7.07px;left:4.6px;letter-spacing:-0.1px">2025-12-16T16:17:50.797</span></div>
<div class="c" style="width:220px"><span class="v" style="top:7.07px;left:4.6px;letter-spacing:-0.1px">2025-12-16T16:17:58.18</span></div>
<div class="c" style="width:146px"><span id="c7_11" class="v" style="top:7.07px;left:4.6px;letter-spacing:-0.085px">Test</span></div>
<div class="c" style="width:120px"><span class="v" style="top:7.07px;left:4.6px"></span></div>
</div>
<div class="r pf s" style="top:351px;height:39px">
<div class="c" style="width:26px"><span class="cb" style="top:13.88px"></span></div>
<div class="c" style="width:106px"><span class="det" style="top:2.50px">Details</span></div>
<div class="c" style="width:92px"><span class="exe" style="top:2.50px;font-style:italic;padding-left:2px;">2 Execs</span></div>
<div class="c" style="width:181px"><span id="c8_0" class="v" style="top:6.82px;left:4.6px;letter-spacing:0.207px">Part Filled</span></div>
<div class="c" style="width:212px"><span class="v" style="top:6.82px;left:4.6px">639009762899282802</span></div>
<div class="c" style="width:70px"><span class="v" style="top:6.82px;left:4.6px"></span></div>
<div class="c" style="width:80px"><span id="c8_3" class="v" style="top:6.82px;left:4.6px;letter-spacing:-0.583px"><span class="buy">Buy</span></span></div>
<div class="c" style="width:109px"><span id="c8_4" class="v" style="top:6.82px;left:4.6px;letter-spacing:0.194px">IBM</span></div>
<div class="c" style="width:155px"><span class="v" style="top:6.82px;left:4.6px">2,000.0000</span></div>
<div class="c" style="width:97px"><span class="v" style="top:6.82px;left:4.6px">99.2000</span></div>
<div class="c" style="width:129px"><span class="v" style="top:6.82px;left:4.6px">1,000.0000</span></div>
<div class="c" style="width:176px"><span class="v" style="top:6.82px;left:4.6px">1,000.0000</span></div>
<div class="c" style="width:219px"><span class="v" style="top:6.82px;left:4.6px;letter-spacing:-0.1px">2025-12-10T15:11:43.173</span></div>
<div class="c" style="width:220px"><span class="v" style="top:6.82px;left:4.6px;letter-spacing:-0.1px">2025-12-10T15:11:50.51</span></div>
<div class="c" style="width:146px"><span id="c8_11" class="v" style="top:6.82px;left:4.6px;letter-spacing:-0.085px">Test</span></div>
<div class="c" style="width:120px"><span class="v" style="top:6.82px;left:4.6px"></span></div>
</div>
<div class="r cx" style="top:390px;height:40px">
<div class="c" style="width:26px"><span class="cb" style="top:14.63px"></span></div>
<div class="c" style="width:106px"><span class="det" style="top:3.25px">Details</span></div>
<div class="c" style="width:92px"><span class="exe" style="top:3.25px;font-style:italic;padding-left:2px;">3 Execs</span></div>
<div class="c" style="width:181px"><span id="c9_0" class="v" style="top:7.57px;left:4.6px;letter-spacing:-0.055px">Cancelled</span></div>
<div class="c" style="width:212px"><span class="v" style="top:7.57px;left:4.6px">4639002065380713804</span></div>
<div class="c" style="width:70px"><span id="c9_2" class="v" style="top:7.57px;left:4.6px;letter-spacing:-1.384px">DAY</span></div>
<div class="c" style="width:80px"><span id="c9_3" class="v" style="top:7.57px;left:4.6px;letter-spacing:-0.493px"><span class="sell">Sell</span></span></div>
<div class="c" style="width:109px"><span id="c9_4" class="v" style="top:7.57px;left:4.6px;letter-spacing:-1.027px">NVDA</span></div>
<div class="c" style="width:155px"><span class="v" style="top:7.57px;left:4.6px">2,300.0000</span></div>
<div class="c" style="width:97px"><span class="v" style="top:7.57px;left:4.6px">0.0000</span></div>
<div class="c" style="width:129px"><span class="v" style="top:7.57px;left:4.6px">0.0000</span></div>
<div class="c" style="width:176px"><span class="v" style="top:7.57px;left:4.6px">0.0000</span></div>
<div class="c" style="width:219px"><span class="v" style="top:7.57px;left:4.6px;letter-spacing:-0.1px">2025-12-01T17:22:10.937</span></div>
<div class="c" style="width:220px"><span class="v" style="top:7.57px;left:4.6px;letter-spacing:-0.1px">2025-12-01T17:22:43.047</span></div>
<div class="c" style="width:146px"><span id="c9_11" class="v" style="top:7.57px;left:4.6px;letter-spacing:0.105px">Test</span></div>
<div class="c" style="width:120px"><span class="v" style="top:7.57px;left:4.6px"></span></div>
</div>
<div class="r nw s" style="top:430px;height:40px">
<div class="c" style="width:26px"><span class="cb" style="top:14.38px"></span></div>
<div class="c" style="width:106px"><span class="det" style="top:3.00px">Details</span></div>
<div class="c" style="width:92px"><span class="exe" style="top:3.00px;">1 Execs</span></div>
<div class="c" style="width:181px"><span id="c10_0" class="v" style="top:7.32px;letter-spacing:0.534px">New</span></div>
<div class="c" style="width:212px"><span class="v" style="top:7.32px">34639002064766992233</span></div>
<div class="c" style="width:70px"><span id="c10_2" class="v" style="top:7.32px;letter-spacing:-1.151px">DAY</span></div>
<div class="c" style="width:80px"><span id="c10_3" class="v" style="top:7.32px;letter-spacing:-0.068px"><span class="buy">Buy</span></span></div>
<div class="c" style="width:109px"><span id="c10_4" class="v" style="top:7.32px;letter-spacing:-1.650px">TSLA</span></div>
<div class="c" style="width:155px"><span class="v" style="top:7.32px">7,500.0000</span></div>
<div class="c" style="width:97px"><span class="v" style="top:7.32px">0.0000</span></div>
<div class="c" style="width:129px"><span class="v" style="top:7.32px">0.0000</span></div>
<div class="c" style="width:176px"><span class="v" style="top:7.32px">7,500.0000</span></div>
<div class="c" style="width:219px"><span class="v" style="top:7.32px;letter-spacing:-0.1px">2025-12-01T17:21:26.093</span></div>
<div class="c" style="width:220px"><span class="v" style="top:7.32px;letter-spacing:-0.1px">2025-12-01T17:21:26.15</span></div>
<div class="c" style="width:146px"><span id="c10_11" class="v" style="top:7.32px;letter-spacing:0.266px">Test</span></div>
<div class="c" style="width:120px"><span class="v" style="top:7.32px"></span></div>
</div>
<div class="r pf" style="top:470px;height:40px">
<div class="c" style="width:26px"><span class="cb" style="top:14.13px"></span></div>
<div class="c" style="width:106px"><span class="det" style="top:2.75px">Details</span></div>
<div class="c" style="width:92px"><span class="exe" style="top:2.75px;font-style:italic;padding-left:2px;">2 Execs</span></div>
<div class="c" style="width:181px"><span id="c11_0" class="v" style="top:7.07px;left:4.6px;letter-spacing:0.207px">Part Filled</span></div>
<div class="c" style="width:212px"><span class="v" style="top:7.07px;left:4.6px">33639002064695781967</span></div>
<div class="c" style="width:70px"><span id="c11_2" class="v" style="top:7.07px;left:4.6px;letter-spacing:-0.223px">DAY</span></div>
<div class="c" style="width:80px"><span id="c11_3" class="v" style="top:7.07px;left:4.6px;letter-spacing:-0.583px"><span class="buy">Buy</span></span></div>
<div class="c" style="width:109px"><span id="c11_4" class="v" style="top:7.07px;left:4.6px;letter-spacing:0.194px">IBM</span></div>
<div class="c" style="width:155px"><span class="v" style="top:7.07px;left:4.6px">10,000.0000</span></div>
<div class="c" style="width:97px"><span class="v" style="top:7.07px;left:4.6px">99.2300</span></div>
<div class="c" style="width:129px"><span class="v" style="top:7.07px;left:4.6px">5,000.0000</span></div>
<div class="c" style="width:176px"><span class="v" style="top:7.07px;left:4.6px">5,000.0000</span></div>
<div class="c" style="width:219px"><span class="v" style="top:7.07px;left:4.6px;letter-spacing:-0.1px">2025-12-01T17:21:13.517</span></div>
<div class="c" style="width:220px"><span class="v" style="top:7.07px;left:4.6px;letter-spacing:-0.1px">2025-12-01T17:21:20.903</span></div>
<div class="c" style="width:146px"><span id="c11_11" class="v" style="top:7.07px;left:4.6px;letter-spacing:-0.085px">Test</span></div>
<div class="c" style="width:120px"><span class="v" style="top:7.07px;left:4.6px"></span></div>
</div>
<div class="r pf s" style="top:510px;height:39px">
<div class="c" style="width:26px"><span class="cb" style="top:13.88px"></span></div>
<div class="c" style="width:106px"><span class="det" style="top:2.50px">Details</span></div>
<div class="c" style="width:92px"><span class="exe" style="top:2.50px;font-style:italic;padding-left:2px;">2 Execs</span></div>
<div class="c" style="width:181px"><span id="c12_0" class="v" style="top:6.82px;left:4.6px;letter-spacing:-0.092px">Pending Replace</span></div>
<div class="c" style="width:212px"><span class="v" style="top:6.82px;left:4.6px">63638996885914599546</span></div>
<div class="c" style="width:70px"><span id="c12_2" class="v" style="top:6.82px;left:4.6px;letter-spacing:-0.223px">DAY</span></div>
<div class="c" style="width:80px"><span id="c12_3" class="v" style="top:6.82px;left:4.6px;letter-spacing:-0.583px"><span class="buy">Buy</span></span></div>
<div class="c" style="width:109px"><span id="c12_4" class="v" style="top:6.82px;left:4.6px;letter-spacing:-0.891px">MSFT</span></div>
<div class="c" style="width:155px"><span class="v" style="top:6.82px;left:4.6px">700.0000</span></div>
<div class="c" style="width:97px"><span class="v" style="top:6.82px;left:4.6px">0.0000</span></div>
<div class="c" style="width:129px"><span class="v" style="top:6.82px;left:4.6px">0.0000</span></div>
<div class="c" style="width:176px"><span class="v" style="top:6.82px;left:4.6px">0.0000</span></div>
<div class="c" style="width:219px"><span class="v" style="top:6.82px;left:4.6px;letter-spacing:-0.1px">2025-11-25T17:29:57.727</span></div>
<div class="c" style="width:220px"><span class="v" style="top:6.82px;left:4.6px;letter-spacing:-0.1px">2025-11-25T17:30:03.103</span></div>
<div class="c" style="width:146px"><span id="c12_11" class="v" style="top:6.82px;left:4.6px;letter-spacing:-0.085px">Test</span></div>
<div class="c" style="width:120px"><span class="v" style="top:6.82px;left:4.6px"></span></div>
</div>
<div class="r nm" style="top:549px;height:40px">
<div class="c" style="width:26px"><span class="cb" style="top:14.63px"></span></div>
<div class="c" style="width:106px"><span class="det" style="top:3.25px">Details</span></div>
<div class="c" style="width:92px"><span class="exe" style="top:3.25px;">1 Execs</span></div>
<div class="c" style="width:181px"><span id="c13_0" class="v" style="top:7.57px;letter-spacing:-0.179px">Pending Replace</span></div>
<div class="c" style="width:212px"><span class="v" style="top:7.57px">51638996878573391659</span></div>
<div class="c" style="width:70px"><span id="c13_2" class="v" style="top:7.57px;letter-spacing:-1.151px">DAY</span></div>
<div class="c" style="width:80px"><span id="c13_3" class="v" style="top:7.57px;letter-spacing:-0.068px"><span class="buy">Buy</span></span></div>
<div class="c" style="width:109px"><span id="c13_4" class="v" style="top:7.57px;letter-spacing:-2.104px">TEST</span></div>
<div class="c" style="width:155px"><span class="v" style="top:7.57px">6,000.0000</span></div>
<div class="c" style="width:97px"><span class="v" style="top:7.57px">0.0000</span></div>
<div class="c" style="width:129px"><span class="v" style="top:7.57px">0.0000</span></div>
<div class="c" style="width:176px"><span class="v" style="top:7.57px">6,000.0000</span></div>
<div class="c" style="width:219px"><span class="v" style="top:7.57px;letter-spacing:-0.1px">2025-11-25T17:17:40.007</span></div>
<div class="c" style="width:220px"><span class="v" style="top:7.57px;letter-spacing:-0.1px">2025-11-25T17:17:40.2</span></div>
<div class="c" style="width:146px"><span id="c13_11" class="v" style="top:7.57px;letter-spacing:0.266px">Test</span></div>
<div class="c" style="width:120px"><span class="v" style="top:7.57px"></span></div>
</div>
<div class="r nw s" style="top:589px;height:40px">
<div class="c" style="width:26px"><span class="cb" style="top:14.38px"></span></div>
<div class="c" style="width:106px"><span class="det" style="top:3.00px">Details</span></div>
<div class="c" style="width:92px"><span class="exe" style="top:3.00px;">1 Execs</span></div>
<div class="c" style="width:181px"><span id="c14_0" class="v" style="top:7.32px;letter-spacing:0.534px">New</span></div>
<div class="c" style="width:212px"><span class="v" style="top:7.32px">2638994160796284917</span></div>
<div class="c" style="width:70px"><span id="c14_2" class="v" style="top:7.32px;letter-spacing:-1.151px">DAY</span></div>
<div class="c" style="width:80px"><span id="c14_3" class="v" style="top:7.32px;letter-spacing:-0.068px"><span class="buy">Buy</span></span></div>
<div class="c" style="width:109px"><span id="c14_4" class="v" style="top:7.32px;letter-spacing:-0.812px">GM</span></div>
<div class="c" style="width:155px"><span class="v" style="top:7.32px">7,000.0000</span></div>
<div class="c" style="width:97px"><span class="v" style="top:7.32px">0.0000</span></div>
<div class="c" style="width:129px"><span class="v" style="top:7.32px">0.0000</span></div>
<div class="c" style="width:176px"><span class="v" style="top:7.32px">7,000.0000</span></div>
<div class="c" style="width:219px"><span class="v" style="top:7.32px;letter-spacing:-0.1px">2025-11-22T13:48:03.083</span></div>
<div class="c" style="width:220px"><span class="v" style="top:7.32px;letter-spacing:-0.1px">2025-11-22T13:48:03.38</span></div>
<div class="c" style="width:146px"><span id="c14_11" class="v" style="top:7.32px;letter-spacing:0.266px">Test</span></div>
<div class="c" style="width:120px"><span class="v" style="top:7.32px"></span></div>
</div>
<div class="r pf" style="top:629px;height:40px">
<div class="c" style="width:26px"><span class="cb" style="top:14.13px"></span></div>
<div class="c" style="width:106px"><span class="det" style="top:2.75px">Details</span></div>
<div class="c" style="width:92px"><span class="exe" style="top:2.75px;font-style:italic;padding-left:2px;">2 Execs</span></div>
<div class="c" style="width:181px"><span id="c15_0" class="v" style="top:7.07px;left:4.6px;letter-spacing:0.207px">Part Filled</span></div>
<div class="c" style="width:212px"><span class="v" style="top:7.07px;left:4.6px">15638991705398081284</span></div>
<div class="c" style="width:70px"><span id="c15_2" class="v" style="top:7.07px;left:4.6px;letter-spacing:-0.223px">DAY</span></div>
<div class="c" style="width:80px"><span id="c15_3" class="v" style="top:7.07px;left:4.6px;letter-spacing:-0.583px"><span class="buy">Buy</span></span></div>
<div class="c" style="width:109px"><span id="c15_4" class="v" style="top:7.07px;left:4.6px;letter-spacing:0.194px">IBM</span></div>
<div class="c" style="width:155px"><span class="v" style="top:7.07px;left:4.6px">10,000.0000</span></div>
<div class="c" style="width:97px"><span class="v" style="top:7.07px;left:4.6px">99.2100</span></div>
<div class="c" style="width:129px"><span class="v" style="top:7.07px;left:4.6px">5,000.0000</span></div>
<div class="c" style="width:176px"><span class="v" style="top:7.07px;left:4.6px">5,000.0000</span></div>
<div class="c" style="width:219px"><span class="v" style="top:7.07px;left:4.6px;letter-spacing:-0.1px">2025-11-19T17:35:47.757</span></div>
<div class="c" style="width:220px"><span class="v" style="top:7.07px;left:4.6px;letter-spacing:-0.1px">2025-11-19T17:35:54.987</span></div>
<div class="c" style="width:146px"><span id="c15_11" class="v" style="top:7.07px;left:4.6px;letter-spacing:-0.085px">Test</span></div>
<div class="c" style="width:120px"><span class="v" style="top:7.07px;left:4.6px"></span></div>
</div>
<div class="r pf s" style="top:669px;height:39px">
<div class="c" style="width:26px"><span class="cb" style="top:13.88px"></span></div>
<div class="c" style="width:106px"><span class="det" style="top:2.50px">Details</span></div>
<div class="c" style="width:92px"><span class="exe" style="top:2.50px;font-style:italic;padding-left:2px;">4 Execs</span></div>
<div class="c" style="width:181px"><span id="c16_0" class="v" style="top:6.82px;left:4.6px;letter-spacing:0.207px">Part Filled</span></div>
<div class="c" style="width:212px"><span class="v" style="top:6.82px;left:4.6px">8638989919589540887</span></div>
<div class="c" style="width:70px"><span class="v" style="top:6.82px;left:4.6px"></span></div>
<div class="c" style="width:80px"><span id="c16_3" class="v" style="top:6.82px;left:4.6px;letter-spacing:-0.583px"><span class="buy">Buy</span></span></div>
<div class="c" style="width:109px"><span id="c16_4" class="v" style="top:6.82px;left:4.6px;letter-spacing:0.194px">IBM</span></div>
<div class="c" style="width:155px"><span class="v" style="top:6.82px;left:4.6px">3,333.0000</span></div>
<div class="c" style="width:97px"><span class="v" style="top:6.82px;left:4.6px">9.2400</span></div>
<div class="c" style="width:129px"><span class="v" style="top:6.82px;left:4.6px">2,222.0000</span></div>
<div class="c" style="width:176px"><span class="v" style="top:6.82px;left:4.6px">556.0000</span></div>
<div class="c" style="width:219px"><span class="v" style="top:6.82px;left:4.6px;letter-spacing:-0.1px">2025-11-17T15:59:19.19</span></div>
<div class="c" style="width:220px"><span class="v" style="top:6.82px;left:4.6px;letter-spacing:-0.1px">2025-11-17T16:00:04.333</span></div>
<div class="c" style="width:146px"><span id="c16_11" class="v" style="top:6.82px;left:4.6px;letter-spacing:-0.085px">Test</span></div>
<div class="c" style="width:120px"><span class="v" style="top:6.82px;left:4.6px"></span></div>
</div>
<div class="r pf" style="top:708px;height:40px">
<div class="c" style="width:26px"><span class="cb" style="top:14.63px"></span></div>
<div class="c" style="width:106px"><span class="det" style="top:3.25px">Details</span></div>
<div class="c" style="width:92px"><span class="exe" style="top:3.25px;font-style:italic;padding-left:2px;">4 Execs</span></div>
<div class="c" style="width:181px"><span id="c17_0" class="v" style="top:7.57px;left:4.6px;letter-spacing:0.207px">Part Filled</span></div>
<div class="c" style="width:212px"><span class="v" style="top:7.57px;left:4.6px">7638989919589520944</span></div>
<div class="c" style="width:70px"><span class="v" style="top:7.57px;left:4.6px"></span></div>
<div class="c" style="width:80px"><span id="c17_3" class="v" style="top:7.57px;left:4.6px;letter-spacing:-0.583px"><span class="buy">Buy</span></span></div>
<div class="c" style="width:109px"><span id="c17_4" class="v" style="top:7.57px;left:4.6px;letter-spacing:-0.891px">MSFT</span></div>
<div class="c" style="width:155px"><span class="v" style="top:7.57px;left:4.6px">3,333.0000</span></div>
<div class="c" style="width:97px"><span class="v" style="top:7.57px;left:4.6px">9.2400</span></div>
<div class="c" style="width:129px"><span class="v" style="top:7.57px;left:4.6px">2,222.0000</span></div>
<div class="c" style="width:176px"><span class="v" style="top:7.57px;left:4.6px">556.0000</span></div>
<div class="c" style="width:219px"><span class="v" style="top:7.57px;left:4.6px;letter-spacing:-0.1px">2025-11-17T15:59:19.117</span></div>
<div class="c" style="width:220px"><span class="v" style="top:7.57px;left:4.6px;letter-spacing:-0.1px">2025-11-17T15:59:56.813</span></div>
<div class="c" style="width:146px"><span id="c17_11" class="v" style="top:7.57px;left:4.6px;letter-spacing:-0.085px">Test</span></div>
<div class="c" style="width:120px"><span class="v" style="top:7.57px;left:4.6px"></span></div>
</div>
<div class="r pf s" style="top:748px;height:40px">
<div class="c" style="width:26px"><span class="cb" style="top:14.38px"></span></div>
<div class="c" style="width:106px"><span class="det" style="top:3.00px">Details</span></div>
<div class="c" style="width:92px"><span class="exe" style="top:3.00px;font-style:italic;padding-left:2px;">4 Execs</span></div>
<div class="c" style="width:181px"><span id="c18_0" class="v" style="top:7.32px;left:4.6px;letter-spacing:0.207px">Part Filled</span></div>
<div class="c" style="width:212px"><span class="v" style="top:7.32px;left:4.6px">6638989919589496472</span></div>
<div class="c" style="width:70px"><span class="v" style="top:7.32px;left:4.6px"></span></div>
<div class="c" style="width:80px"><span id="c18_3" class="v" style="top:7.32px;left:4.6px;letter-spacing:-0.583px"><span class="buy">Buy</span></span></div>
<div class="c" style="width:109px"><span id="c18_4" class="v" style="top:7.32px;left:4.6px;letter-spacing:-0.162px">GM</span></div>
<div class="c" style="width:155px"><span class="v" style="top:7.32px;left:4.6px">3,333.0000</span></div>
<div class="c" style="width:97px"><span class="v" style="top:7.32px;left:4.6px">9.2400</span></div>
<div class="c" style="width:129px"><span class="v" style="top:7.32px;left:4.6px">2,222.0000</span></div>
<div class="c" style="width:176px"><span class="v" style="top:7.32px;left:4.6px">556.0000</span></div>
<div class="c" style="width:219px"><span class="v" style="top:7.32px;left:4.6px;letter-spacing:-0.1px">2025-11-17T15:59:19.043</span></div>
<div class="c" style="width:220px"><span class="v" style="top:7.32px;left:4.6px;letter-spacing:-0.1px">2025-11-17T15:59:49.077</span></div>
<div class="c" style="width:146px"><span id="c18_11" class="v" style="top:7.32px;left:4.6px;letter-spacing:-0.085px">Test</span></div>
<div class="c" style="width:120px"><span class="v" style="top:7.32px;left:4.6px"></span></div>
</div>
<div class="r pf" style="top:788px;height:40px">
<div class="c" style="width:26px"><span class="cb" style="top:14.13px"></span></div>
<div class="c" style="width:106px"><span class="det" style="top:2.75px">Details</span></div>
<div class="c" style="width:92px"><span class="exe" style="top:2.75px;font-style:italic;padding-left:2px;">4 Execs</span></div>
<div class="c" style="width:181px"><span id="c19_0" class="v" style="top:7.07px;left:4.6px;letter-spacing:0.207px">Part Filled</span></div>
<div class="c" style="width:212px"><span class="v" style="top:7.07px;left:4.6px">5638989919586622521</span></div>
<div class="c" style="width:70px"><span class="v" style="top:7.07px;left:4.6px"></span></div>
<div class="c" style="width:80px"><span id="c19_3" class="v" style="top:7.07px;left:4.6px;letter-spacing:-0.583px"><span class="buy">Buy</span></span></div>
<div class="c" style="width:109px"><span id="c19_4" class="v" style="top:7.07px;left:4.6px;letter-spacing:0.194px">IBM</span></div>
<div class="c" style="width:155px"><span class="v" style="top:7.07px;left:4.6px">3,333.0000</span></div>
<div class="c" style="width:97px"><span class="v" style="top:7.07px;left:4.6px">9.2400</span></div>
<div class="c" style="width:129px"><span class="v" style="top:7.07px;left:4.6px">2,222.0000</span></div>
<div class="c" style="width:176px"><span class="v" style="top:7.07px;left:4.6px">556.0000</span></div>
<div class="c" style="width:219px"><span class="v" style="top:7.07px;left:4.6px;letter-spacing:-0.1px">2025-11-17T15:59:18.937</span></div>
<div class="c" style="width:220px"><span class="v" style="top:7.07px;left:4.6px;letter-spacing:-0.1px">2025-11-17T15:59:41.617</span></div>
<div class="c" style="width:146px"><span id="c19_11" class="v" style="top:7.07px;left:4.6px;letter-spacing:-0.085px">Test</span></div>
<div class="c" style="width:120px"><span class="v" style="top:7.07px;left:4.6px"></span></div>
</div>
</div>
<div class="abs" style="left:442px;top:1308px;width:2047px;height:23px;background:#fafafa"></div>
<div class="abs" style="left:469px;top:1313px;width:1462px;height:13px;border-radius:6.5px;background:#8b8b8b"></div>
<svg class="abs" style="left:447.5px;top:1312.5px" width="12" height="14" viewBox="0 0 12 14"><path d="M11 0.5L1 7l10 6.5z" fill="#8b8b8b"/></svg>
<svg class="abs" style="left:2471.5px;top:1312.5px" width="12" height="14" viewBox="0 0 12 14"><path d="M1 0.5L11 7L1 13.5z" fill="#8b8b8b"/></svg>
<span id="t37" class="tx" style="top:1351.16px;font-size:18.00px;left:441.80px;letter-spacing:0.312px;color:#2d353c">Showing 1 to 20 of 23 entries</span>
<span id="t38" class="tx" style="top:1351.16px;font-size:18.00px;left:702.50px;letter-spacing:0.256px;color:#2d353c">2 rows selected</span>
<div class="pg" style="left:2172.2px;width:112.5px;background:#e9ecef;color:#a9b1b9;border-color:#cfd4da">Previous</div>
<div class="pg" style="left:2294px;width:49px;background:#348fe2;border-color:#348fe2;color:#fff">1</div>
<div class="pg" style="left:2352.2px;width:47.5px">2</div>
<div class="pg" style="left:2409px;width:79.7px">Next</div>
</div>
</body>
</html>
